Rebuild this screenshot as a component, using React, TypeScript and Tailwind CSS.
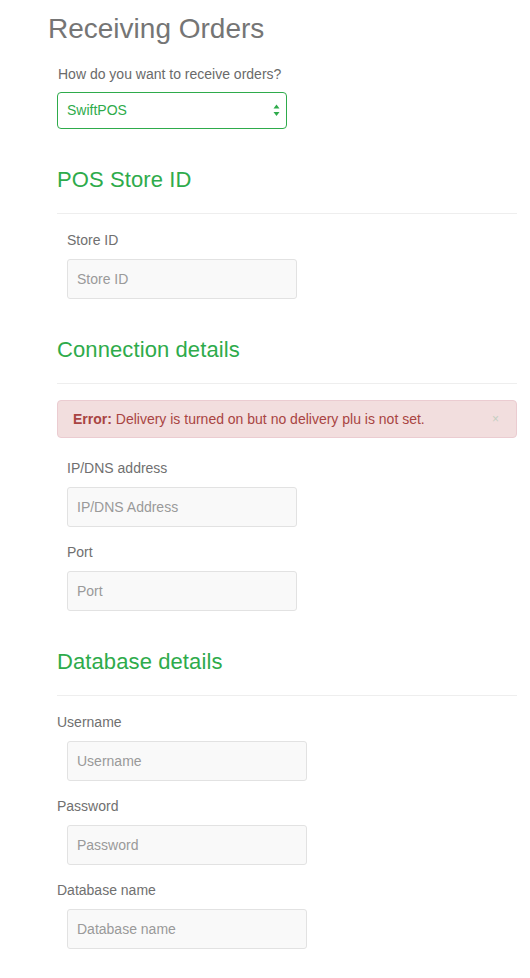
import React from "react";

const font = { fontFamily: '"Liberation Sans", Arial, Helvetica, sans-serif' };

function Field({ label, placeholder, labelIndent = true, wide = false }: { label: string; placeholder: string; labelIndent?: boolean; wide?: boolean }) {
  return (
    <div className="mb-[15px] flex flex-col">
      <div className={`text-[14px] leading-[20px] text-[#707070] mb-[9px] ${labelIndent ? "pl-[10px]" : ""}`}>{label}</div>
      <div className="pl-[10px]">
        <div className={`${wide ? "w-[240px]" : "w-[230px]"} h-[40px] bg-[#f9f9f9] border border-[#e2e2e2] rounded-[3px] flex items-center pl-[9px] text-[14px] text-[#9a9a9a]`}>
          {placeholder}
        </div>
      </div>
    </div>
  );
}

function SectionHeading({ title }: { title: string }) {
  return (
    <div className="mt-[23px] flex flex-col">
      <h2 className="text-[22px] leading-[26px] text-[#2eab4b] mb-[20px] tracking-[0.1px]">{title}</h2>
      <div className="h-px bg-[#eeeeee] mb-[16px]" />
    </div>
  );
}

export default function App() {
  return (
    <div className="min-h-[978px] bg-white pl-[48px] pr-[13px] flex flex-col" style={font}>
      <h1 className="pt-[13px] text-[28px] leading-[32px] text-[#757575]">Receiving Orders</h1>
      <div className="pl-[9px] flex flex-col">
        <div className="mt-[19px] pl-[1px] text-[14px] leading-[20px] text-[#6a6a6a]">How do you want to receive orders?</div>
        <div className="mt-[8px] w-[230px] h-[37px] border border-[#2eab4b] rounded-[4px] flex items-center justify-between pl-[9px] pr-[6px] text-[14px] text-[#2eab4b] mb-[15px]">
          <span>SwiftPOS</span>
          <svg width="7" height="13" viewBox="0 0 7 13">
            <polygon points="3.5,0.5 6.5,4.5 0.5,4.5" fill="#2eab4b" />
            <polygon points="0.5,8 6.5,8 3.5,12" fill="#2eab4b" />
          </svg>
        </div>

        <SectionHeading title="POS Store ID" />
        <Field label="Store ID" placeholder="Store ID" />

        <SectionHeading title="Connection details" />
        <div className="h-[38px] bg-[#f2dede] border border-[#ebccd1] rounded-[4px] flex items-center justify-between pl-[15px] pr-[17px] text-[14px] text-[#a94442] mb-[20px]">
          <span><b>Error:</b> Delivery is turned on but no delivery plu is not set.</span>
          <span className="text-[12px] text-[#c5cfc2]">×</span>
        </div>
        <Field label="IP/DNS address" placeholder="IP/DNS Address" />
        <Field label="Port" placeholder="Port" />

        <SectionHeading title="Database details" />
        <Field label="Username" placeholder="Username" labelIndent={false} wide />
        <Field label="Password" placeholder="Password" labelIndent={false} wide />
        <Field label="Database name" placeholder="Database name" labelIndent={false} wide />
      </div>
    </div>
  );
}
